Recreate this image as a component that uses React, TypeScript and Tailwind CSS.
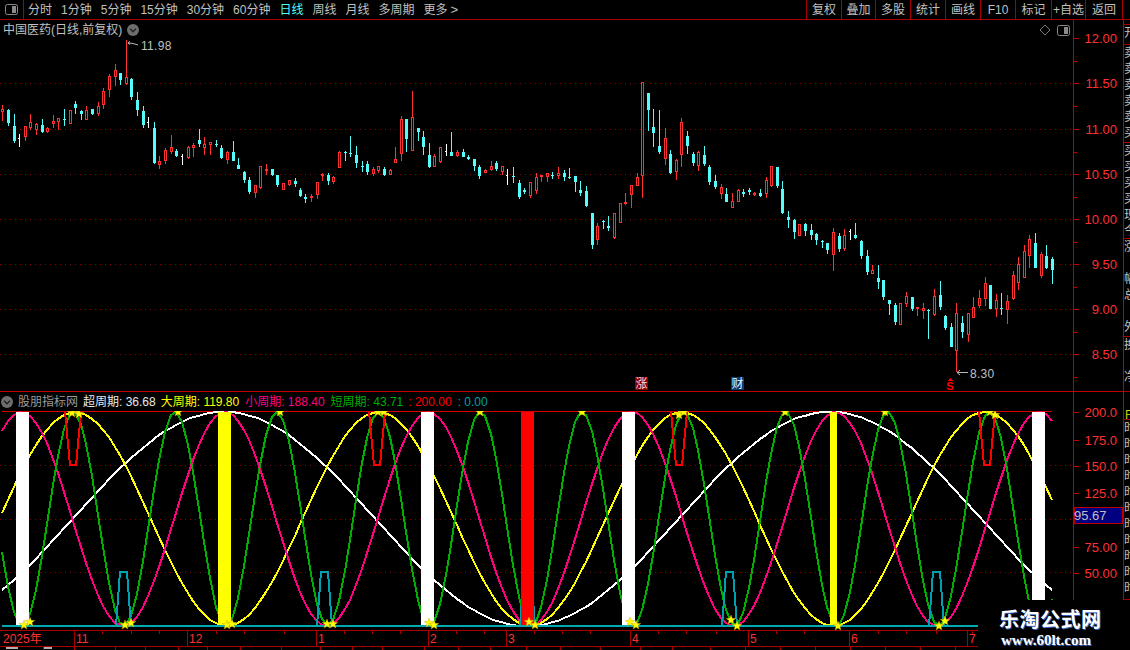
const tabs = ["分时", "1分钟", "5分钟", "15分钟", "30分钟", "60分钟", "日线", "周线", "月线", "多周期", "更多"];
const buttons = [
  { label: "复权", w: "w-[35px]" },
  { label: "叠加", w: "w-[34px]" },
  { label: "多股", w: "w-[35px]" },
  { label: "统计", w: "w-[35px]" },
  { label: "画线", w: "w-[35px]" },
  { label: "F10", w: "w-[35px]" },
  { label: "标记", w: "w-[36px]" },
  { label: "+自选", w: "w-[34px]" },
  { label: "返回", w: "w-[37px]" },
];

// x, high, body top, body bottom, low, r=up c=down w=flat (pixel rows read off the chart)
type Candle = [number, number, number, number, number, "r" | "c" | "w"];
const candles: Candle[] = [
  [2, 105, 109, 112, 121, "r"], [8, 109, 110, 123, 126, "c"], [14, 114, 126, 141, 143, "c"], [19, 134, 138, 138, 147, "w"],
  [25, 126, 126, 137, 141, "r"], [30, 114, 122, 128, 130, "r"], [36, 123, 124, 130, 135, "r"], [42, 119, 125, 132, 133, "c"],
  [47, 127, 128, 132, 133, "r"], [53, 115, 121, 124, 128, "r"], [58, 118, 118, 122, 130, "r"], [64, 109, 119, 119, 126, "c"],
  [70, 110, 110, 124, 124, "r"], [75, 101, 104, 108, 114, "c"], [81, 110, 111, 114, 120, "c"], [86, 106, 110, 120, 120, "r"],
  [92, 109, 109, 114, 115, "c"], [98, 102, 106, 114, 116, "r"], [103, 88, 91, 105, 109, "r"], [109, 74, 76, 90, 97, "r"],
  [115, 64, 70, 77, 86, "r"], [120, 73, 73, 80, 85, "c"], [126, 40, 77, 84, 85, "r"], [131, 78, 79, 97, 100, "c"],
  [137, 92, 100, 110, 116, "c"], [143, 106, 111, 125, 128, "c"], [148, 117, 122, 122, 128, "w"], [154, 122, 128, 163, 164, "c"],
  [159, 156, 161, 165, 169, "r"], [165, 148, 150, 161, 164, "r"], [171, 135, 147, 152, 154, "r"], [176, 149, 151, 156, 157, "c"],
  [182, 154, 156, 156, 165, "w"], [188, 146, 147, 158, 159, "r"], [193, 143, 145, 148, 157, "r"], [199, 129, 140, 144, 147, "c"],
  [204, 137, 144, 148, 155, "r"], [210, 142, 142, 145, 155, "r"], [216, 140, 144, 144, 147, "c"], [221, 145, 148, 158, 159, "c"],
  [227, 151, 152, 160, 164, "r"], [233, 141, 152, 161, 161, "c"], [238, 158, 165, 169, 169, "c"], [244, 171, 172, 180, 183, "c"],
  [249, 177, 180, 192, 194, "c"], [255, 185, 185, 193, 198, "r"], [260, 166, 166, 188, 189, "r"], [266, 164, 169, 171, 175, "r"],
  [272, 169, 169, 175, 176, "c"], [277, 175, 175, 185, 187, "c"], [283, 183, 183, 190, 190, "r"], [289, 180, 180, 185, 186, "r"],
  [295, 178, 181, 184, 187, "c"], [300, 188, 190, 196, 197, "c"], [305, 194, 197, 199, 203, "c"], [311, 194, 196, 198, 202, "r"],
  [317, 182, 182, 195, 199, "r"], [322, 173, 174, 176, 181, "r"], [328, 173, 175, 181, 185, "c"], [333, 176, 177, 182, 184, "r"],
  [339, 151, 152, 168, 168, "r"], [345, 151, 152, 152, 161, "c"], [350, 136, 153, 154, 157, "c"], [356, 146, 155, 163, 168, "c"],
  [362, 161, 166, 166, 172, "c"], [367, 161, 164, 172, 175, "c"], [373, 167, 169, 174, 176, "r"], [378, 166, 166, 171, 173, "r"],
  [384, 167, 169, 175, 176, "c"], [390, 169, 170, 175, 175, "r"], [395, 147, 159, 163, 163, "r"], [401, 116, 119, 154, 161, "r"],
  [406, 119, 119, 139, 152, "c"], [412, 91, 117, 151, 151, "r"], [418, 128, 128, 132, 141, "c"], [423, 131, 137, 147, 155, "c"],
  [429, 143, 155, 167, 168, "c"], [434, 154, 156, 167, 167, "r"], [440, 147, 147, 162, 163, "r"], [446, 144, 151, 151, 156, "w"],
  [451, 132, 152, 156, 156, "c"], [457, 150, 152, 156, 157, "r"], [463, 149, 152, 157, 157, "c"], [468, 155, 157, 159, 160, "c"],
  [474, 159, 159, 166, 171, "c"], [479, 165, 167, 176, 179, "c"], [485, 169, 170, 173, 173, "r"], [491, 161, 166, 170, 171, "r"],
  [496, 161, 163, 169, 171, "c"], [502, 166, 166, 172, 175, "r"], [507, 169, 175, 175, 185, "w"], [513, 167, 176, 176, 183, "c"],
  [519, 180, 183, 197, 199, "c"], [524, 188, 190, 192, 194, "c"], [530, 182, 182, 196, 198, "r"], [536, 173, 177, 191, 194, "r"],
  [541, 175, 175, 177, 182, "r"], [547, 173, 173, 177, 182, "r"], [552, 172, 175, 175, 179, "c"], [558, 167, 173, 176, 179, "r"],
  [564, 170, 173, 177, 181, "c"], [569, 168, 177, 177, 179, "c"], [575, 176, 176, 182, 192, "c"], [580, 181, 190, 193, 196, "c"],
  [586, 186, 191, 206, 207, "c"], [592, 213, 213, 245, 249, "c"], [597, 223, 226, 240, 245, "r"], [603, 220, 221, 221, 229, "c"],
  [608, 216, 226, 228, 231, "c"], [614, 213, 213, 238, 239, "r"], [620, 203, 203, 223, 223, "r"], [625, 193, 202, 204, 205, "r"],
  [631, 185, 185, 195, 208, "r"], [637, 173, 177, 186, 186, "r"], [642, 82, 82, 176, 198, "r"], [648, 93, 93, 110, 131, "c"],
  [653, 109, 127, 133, 147, "c"], [659, 110, 146, 152, 154, "c"], [665, 128, 138, 159, 165, "r"], [670, 150, 154, 173, 174, "c"],
  [676, 159, 160, 172, 180, "r"], [681, 118, 122, 155, 167, "r"], [687, 131, 136, 146, 154, "c"], [693, 152, 154, 163, 166, "c"],
  [698, 151, 152, 166, 171, "r"], [704, 146, 155, 164, 166, "c"], [709, 165, 167, 182, 185, "c"], [715, 175, 181, 187, 189, "c"],
  [721, 184, 187, 194, 199, "r"], [726, 188, 194, 202, 202, "c"], [732, 193, 201, 208, 208, "r"], [738, 189, 190, 202, 202, "r"],
  [743, 189, 192, 194, 197, "c"], [749, 188, 190, 192, 195, "c"], [754, 192, 193, 195, 196, "r"], [760, 189, 193, 196, 197, "c"],
  [766, 177, 180, 194, 198, "r"], [771, 166, 166, 186, 187, "r"], [777, 167, 167, 186, 188, "c"], [782, 181, 189, 213, 214, "c"],
  [788, 211, 217, 220, 228, "c"], [794, 219, 220, 232, 239, "c"], [799, 224, 224, 236, 236, "r"], [805, 223, 224, 231, 236, "c"],
  [811, 224, 230, 235, 240, "c"], [816, 233, 234, 240, 245, "c"], [822, 240, 241, 241, 248, "c"], [827, 243, 243, 250, 254, "c"],
  [833, 228, 232, 255, 271, "r"], [839, 233, 236, 249, 252, "c"], [844, 229, 235, 249, 251, "r"], [850, 229, 231, 231, 240, "w"],
  [855, 223, 235, 238, 239, "c"], [861, 240, 241, 256, 259, "c"], [867, 250, 256, 272, 275, "c"], [872, 265, 270, 274, 274, "r"],
  [878, 265, 278, 282, 289, "c"], [883, 280, 280, 297, 300, "c"], [889, 300, 300, 304, 315, "c"], [895, 303, 305, 322, 325, "c"],
  [900, 303, 303, 325, 325, "r"], [906, 292, 296, 304, 307, "r"], [912, 297, 297, 309, 311, "c"], [917, 307, 307, 309, 316, "r"],
  [923, 303, 308, 311, 319, "r"], [928, 309, 310, 310, 339, "c"], [934, 289, 296, 315, 316, "r"], [940, 281, 295, 307, 310, "c"],
  [945, 315, 316, 328, 330, "c"], [951, 323, 327, 347, 347, "c"], [956, 303, 313, 351, 372, "r"], [962, 316, 323, 332, 338, "c"],
  [968, 313, 313, 335, 342, "r"], [973, 297, 307, 318, 318, "r"], [979, 290, 298, 306, 308, "r"], [985, 277, 283, 299, 306, "r"],
  [990, 285, 285, 309, 309, "c"], [996, 294, 300, 309, 317, "r"], [1001, 293, 308, 308, 315, "c"], [1007, 295, 301, 310, 324, "r"],
  [1013, 271, 275, 299, 300, "r"], [1018, 257, 264, 283, 290, "r"], [1024, 245, 251, 278, 278, "r"], [1029, 235, 239, 256, 268, "r"],
  [1035, 233, 243, 268, 268, "c"], [1041, 252, 254, 276, 278, "r"], [1046, 245, 256, 268, 269, "c"], [1052, 257, 259, 270, 284, "c"],
];

const RED = "#ff3030";
const CYAN = "#54fcfc";

const wave = (period: number, peak: number) =>
  candles
    .map(([x]) => `${x},${Math.round(412 + (100 - 100 * Math.cos(((x - peak) / period) * 2 * Math.PI)) * 1.07)}`)
    .join(" ");

const starPoints = (cx: number, cy: number, r = 5) =>
  Array.from({ length: 10 }, (_, i) => {
    const a = -Math.PI / 2 + (i * Math.PI) / 5;
    const d = i % 2 ? r * 0.42 : r;
    return `${(cx + d * Math.cos(a)).toFixed(1)},${(cy + d * Math.sin(a)).toFixed(1)}`;
  }).join(" ");

const stars = [
  [24, 625], [30, 622], [125, 625], [131, 623], [227, 625], [232, 624], [327, 624], [333, 624], [429, 623], [434, 625],
  [529, 622], [535, 625], [630, 622], [636, 625], [731, 620], [737, 626], [838, 626], [939, 626], [945, 621],
  [72, 413], [79, 414], [178, 412], [280, 412], [378, 412], [384, 412], [480, 412], [582, 412], [679, 415], [684, 412],
  [785, 412], [885, 412], [990, 412], [995, 415],
];

const months = [
  { label: "2025年", w: "w-[74px]" },
  { label: "11", w: "w-[113px]" },
  { label: "12", w: "w-[129px]" },
  { label: "1", w: "w-[112px]" },
  { label: "2", w: "w-[78px]" },
  { label: "3", w: "w-[124px]" },
  { label: "4", w: "w-[118px]" },
  { label: "5", w: "w-[101px]" },
  { label: "6", w: "w-[118px]" },
  { label: "7", w: "w-[11px]" },
];

const timeTicks = [102, 131, 159, 216, 244, 284, 344, 372, 400, 456, 484, 534, 562, 590, 658, 686, 716, 776, 804, 878, 906, 936, 972];
const lowerTicks = [43, 74, 115, 145, 178, 207, 240, 281, 320, 352, 382, 424, 458, 490, 526, 560, 600, 640, 672, 710, 745, 780, 815, 850, 885, 920, 955];

const stripSections = [
  { h: "h-[5px]", lines: [] as string[], color: "text-[#c0c0c0]" },
  { h: "h-[20px]", lines: ["开"], color: "text-[#c0c0c0]" },
  { h: "h-[98px]", lines: ["卖", "卖", "卖", "卖", "卖", "买"], color: "text-[#c0c0c0]" },
  { h: "h-[96px]", lines: ["买", "买", "买", "买", "现", "今"], color: "text-[#c0c0c0]" },
  { h: "h-[98px]", lines: ["涨", "", "幅", "总", "", "外"], color: "text-[#c0c0c0]" },
  { h: "h-[55px]", lines: ["换", "", "净"], color: "text-[#c0c0c0]" },
  { h: "h-[28px]", lines: ["", "日"], color: "text-[#e0e000]" },
  { h: "h-[180px]", lines: ["时", "时", "时", "时", "时", "时", "时", "时", "时", "时", "时"], color: "text-[#c0c0c0]" },
];

function PanelIcon() {
  return (
    <svg width="13" height="11" viewBox="0 0 13 11">
      <rect x="0.5" y="0.5" width="12" height="10" rx="2" fill="none" stroke="#8a8a8a" />
      <rect x="7" y="2" width="4" height="7" fill="#8a8a8a" />
    </svg>
  );
}

function Chevron({ size = 12 }: { size?: number }) {
  return (
    <svg width={size} height={size} viewBox="0 0 12 12" className="shrink-0">
      <circle cx="6" cy="6" r="6" fill="#6e6e6e" />
      <path d="M3 4.8 6 7.8 9 4.8" fill="none" stroke="#222" strokeWidth="1.4" />
    </svg>
  );
}

function KlineChart() {
  return (
    <svg width="1073" height="352" viewBox="0 39 1073 352" shapeRendering="crispEdges" className="block">
      {[83, 129, 174, 219, 264, 309, 354].map((y) => (
        <line key={y} x1="0" x2="1073" y1={y + 0.5} y2={y + 0.5} stroke="#8c0000" strokeDasharray="1 4" />
      ))}
      {candles.map(([x, hi, top, bot, lo, kind]) => {
        if (kind === "w") {
          return (
            <g key={x} fill="#ffffff">
              <rect x={x} y={hi} width="1" height={lo - hi} />
              <rect x={x - 1} y={top} width="1" height="1" />
            </g>
          );
        }
        const color = kind === "r" ? RED : CYAN;
        return (
          <g key={x} fill={color}>
            <rect x={x} y={hi} width="1" height={lo - hi} />
            <rect x={x - 1} y={top} width="3" height={Math.max(bot - top, 1)} />
            {kind === "r" && bot - top > 2 && <rect x={x} y={top + 1} width="1" height={bot - top - 2} fill="#000000" />}
          </g>
        );
      })}
      <g stroke="#b8b8b8" fill="none" shapeRendering="auto">
        <path d="M130 41.5 128 43 130 44.5M128 43 133 43.5 138 45" />
        <path d="M960 370 957 372.5 960 375M957 372.5H968" />
      </g>
      <text x="141" y="50" className="fill-[#c0c0c0] text-[12px]" letterSpacing="0.3" shapeRendering="auto">11.98</text>
      <text x="970" y="378" className="fill-[#c0c0c0] text-[12px]" letterSpacing="0.3" shapeRendering="auto">8.30</text>
      <rect x="635" y="377" width="13" height="13" fill="#8a0000" />
      <text x="641.5" y="388" textAnchor="middle" className="fill-[#ffd8d8] text-[12px]">涨</text>
      <rect x="731" y="377" width="13" height="13" fill="#0a3c6e" />
      <text x="737.5" y="388" textAnchor="middle" className="fill-[#e8f4ff] text-[12px]">财</text>
      <path d="M947 381H953L950 378Z" fill="#ff0000" />
      <text x="950" y="389.5" textAnchor="middle" className="fill-[#ff0000] text-[11px] font-bold">S</text>
    </svg>
  );
}

function IndicatorChart() {
  const line = { fill: "none", strokeWidth: 2 };
  return (
    <svg width="1073" height="219" viewBox="0 411 1073 219" shapeRendering="crispEdges" className="block">
      {[465, 519, 572].map((y) => (
        <line key={y} x1="0" x2="1073" y1={y + 0.5} y2={y + 0.5} stroke="#8c0000" strokeDasharray="1 4" />
      ))}
      <line x1="2" x2="1052" y1="411.5" y2="411.5" stroke="#d80000" />
      <polyline points={wave(606, 224)} stroke="#ffffff" {...line} />
      <polyline points={wave(303.3, 75)} stroke="#ffff00" {...line} />
      <polyline points={wave(203.5, 225)} stroke="#ff0080" {...line} />
      <polyline points={wave(101.8, 175)} stroke="#00b000" {...line} />
      {[73, 377, 679, 987].map((c) => (
        <polyline key={c} points={`${c - 8},412 ${c - 3},465 ${c + 3},465 ${c + 8},412`} stroke="#ff0000" {...line} />
      ))}
      {[124, 325, 528, 730, 937].map((c) => (
        <polyline key={c} points={`${c - 8},626 ${c - 4},572 ${c + 3},572 ${c + 7},626`} stroke="#00a0b0" {...line} />
      ))}
      {[16, 421, 622, 1032].map((x) => (
        <rect key={x} x={x} y="412" width="13" height="214" fill="#ffffff" />
      ))}
      <rect x="218" y="412" width="13" height="214" fill="#ffff00" />
      <rect x="830" y="412" width="7" height="214" fill="#ffff00" />
      <rect x="521" y="412" width="13" height="214" fill="#ff0000" />
      <line x1="2" x2="978" y1="626" y2="626" stroke="#00a8b0" strokeWidth="2" />
      {stars.map(([x, y]) => (
        <polygon key={`${x}-${y}`} points={starPoints(x, y)} fill="#ffff00" stroke="#c8a000" strokeWidth="0.4" shapeRendering="auto" />
      ))}
    </svg>
  );
}

function PriceAxis() {
  const labels: [string, number][] = [
    ["12.00", 38], ["11.50", 83], ["11.00", 129], ["10.50", 174], ["10.00", 219], ["9.50", 264], ["9.00", 309], ["8.50", 354],
  ];
  return (
    <svg width="49" height="371" viewBox="1074 20 49 371" className="block">
      {labels.map(([text, y]) => (
        <g key={text}>
          <rect x="1074" y={y} width="5" height="1" fill="#c00000" />
          <rect x="1074" y={y + 23} width="3" height="1" fill="#c00000" />
          <text x="1117" y={y + 5} textAnchor="end" className="fill-[#ff3030] text-[13px]">{text}</text>
        </g>
      ))}
    </svg>
  );
}

function IndicatorAxis() {
  const labels: [string, number][] = [
    ["200.0", 412], ["175.0", 440], ["150.0", 466], ["125.0", 493], ["75.00", 547], ["50.00", 573],
  ];
  return (
    <svg width="49" height="209" viewBox="1074 392 49 209" className="block">
      {labels.map(([text, y]) => (
        <g key={text}>
          <rect x="1074" y={y} width="5" height="1" fill="#c00000" />
          <text x="1117" y={y + 5} textAnchor="end" className="fill-[#ff3030] text-[13px]">{text}</text>
        </g>
      ))}
      <rect x="1074.5" y="507.5" width="48" height="16" fill="#000080" stroke="#c00000" />
      <text x="1074" y="520" className="fill-[#c0c0c0] text-[13px]">95.67</text>
    </svg>
  );
}

export default function App() {
  return (
    <div className="relative w-[1130px] h-[650px] overflow-hidden bg-black font-['Liberation_Sans','Noto_Sans_CJK_SC',sans-serif] text-[12px] text-[#c0c0c0]">
      {/* Toolbar */}
      <div className="flex h-[20px] border-b border-[#a80000]">
        <div className="flex w-[24px] shrink-0 items-center justify-center border-r border-[#a80000]">
          <PanelIcon />
        </div>
        <div className="ml-[4px] flex items-center gap-[9px] leading-none">
          {tabs.map((t) => (
            <span key={t} className={t === "日线" ? "text-[#54fcfc]" : ""}>
              {t}
              {t === "更多" && <span className="ml-[3px] text-[13px]">&gt;</span>}
            </span>
          ))}
        </div>
        <div className="ml-auto flex">
          {buttons.map((b) => (
            <div key={b.label} className={`${b.w} flex items-center justify-center border-l border-[#a80000] leading-none whitespace-nowrap`}>
              {b.label}
            </div>
          ))}
          <div className="w-[8px] border-l border-[#a80000]" />
        </div>
      </div>

      <div className="flex h-[630px]">
        {/* Charts */}
        <div className="w-[1073px] shrink-0">
          <div className="relative flex h-[19px] items-center pl-[3px] leading-none">
            <span>中国医药(日线,前复权)</span>
            <span className="ml-[5px]">
              <Chevron />
            </span>
            <div className="absolute right-[3px] top-[4px] flex items-center gap-[6px]">
              <svg width="12" height="12" viewBox="0 0 12 12">
                <path d="M6 1 11 6 6 11 1 6Z" fill="none" stroke="#7a7a7a" />
              </svg>
              <PanelIcon />
            </div>
          </div>
          <KlineChart />

          {/* Indicator title */}
          <div className="flex h-[20px] items-center border-t border-[#c00000] pl-[1px] leading-none whitespace-nowrap">
            <Chevron />
            <span className="ml-[5px] text-[#9a9a9a]">股朋指标网</span>
            <span className="ml-[5px] text-[#e8e8e8]">超周期: 36.68</span>
            <span className="ml-[5px] text-[#ffff00]">大周期: 119.80</span>
            <span className="ml-[6px] text-[#ff0080]">小周期: 188.40</span>
            <span className="ml-[6px] text-[#00b000]">短周期: 43.71</span>
            <span className="ml-[5px] text-[#ff0000]">: 200.00</span>
            <span className="ml-[6px] text-[#00a0b0]">: 0.00</span>
          </div>
          <IndicatorChart />

          {/* Time axis */}
          <div className="relative flex h-[17px] w-[978px] border-y border-[#a80000] text-[#ff3030] leading-none">
            {months.map((m) => (
              <div key={m.label} className={`${m.w} flex items-center overflow-hidden border-l border-[#a80000] pl-[1px] first:border-l-0 first:pl-[3px]`}>
                {m.label}
              </div>
            ))}
            <svg width="978" height="3" className="absolute left-0 top-0">
              {timeTicks.map((x) => (
                <rect key={x} x={x} y="0" width="1" height="3" fill="#a80000" />
              ))}
            </svg>
          </div>
          <svg width="978" height="3" className="block">
            {lowerTicks.map((x) => (
              <rect key={x} x={x} y="0" width="1" height="3" fill="#a80000" />
            ))}
            <rect x="6" y="0" width="12" height="2" fill="#b0b0b0" />
            <rect x="44" y="0" width="8" height="2" fill="#b0b0b0" />
          </svg>
        </div>

        {/* Axis */}
        <div className="w-[50px] shrink-0 border-l border-[#c00000]">
          <PriceAxis />
          <div className="h-[1px] bg-[#c00000]" />
          <IndicatorAxis />
        </div>

        {/* Clipped quote panel on the right edge */}
        <div className="w-[7px] shrink-0 overflow-hidden border-l border-[#c00000]">
          {stripSections.map((s, i) => (
            <div key={i} className={`${s.h} w-[40px] overflow-hidden border-b border-[#a80000] leading-[16px] ${s.color}`}>
              {s.lines.map((l, j) => (
                <div key={j} className="h-[16px]">{l}</div>
              ))}
            </div>
          ))}
        </div>
      </div>

      {/* Watermark */}
      <div className="absolute bottom-0 right-0 flex h-[50px] w-[152px] flex-col items-start bg-black pl-[21px] pt-[10px] leading-none">
        <span className="text-[20px] font-bold tracking-[0.5px] text-white [text-shadow:1px_1px_0_#3060c0]">乐淘公式网</span>
        <span className="ml-[2px] mt-[3px] font-['Liberation_Serif',serif] text-[15px] font-bold text-white [text-shadow:1px_1px_0_#3060c0]">www.60lt.com</span>
      </div>
    </div>
  );
}
